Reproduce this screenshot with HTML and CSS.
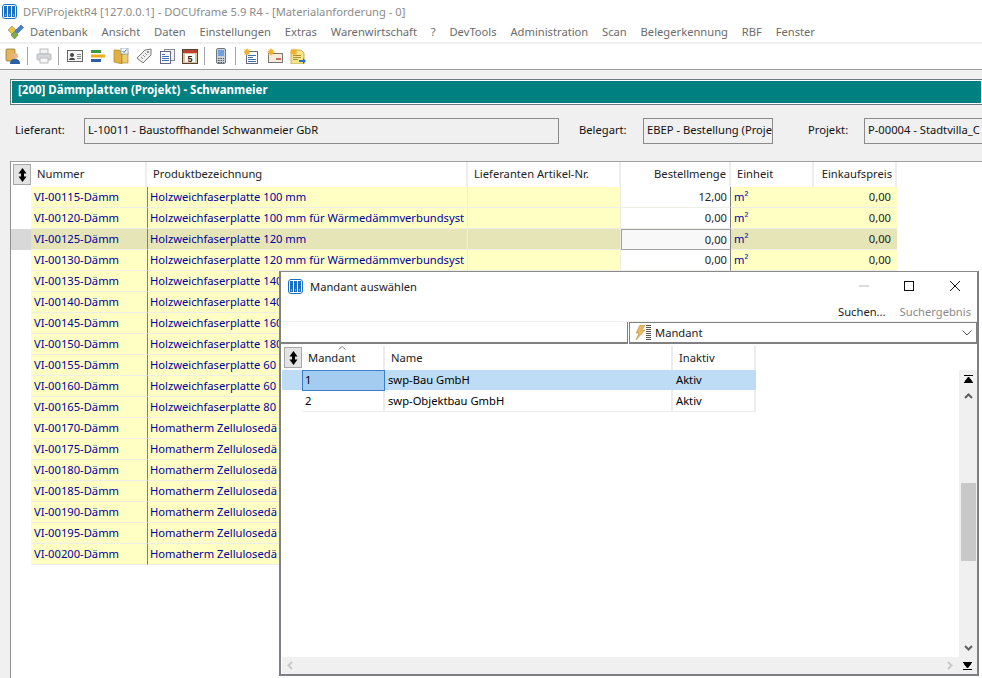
FILE: index.html
```html
<!DOCTYPE html>
<html lang="de">
<head>
<meta charset="utf-8">
<title>DFViProjektR4</title>
<link rel="stylesheet" href="styles.css">
</head>
<body>
<div class="app">
  <header class="titlebar">
    <svg class="appicon" viewBox="0 0 15 15"><rect x="0.5" y="0.5" width="14" height="14" rx="2.5" fill="#fff" stroke="#1a6fc0"/><rect x="2" y="2" width="3" height="11" fill="#1a6fc0"/><rect x="6" y="2" width="3" height="11" fill="#1a6fc0"/><rect x="10" y="2" width="3" height="11" fill="#1a6fc0"/><path d="M3 11h.8M7 11h.8M11 11h.8" stroke="#fff"/></svg>
    <span>DFViProjektR4 [127.0.0.1] - DOCUframe 5.9 R4 - [Materialanforderung - 0]</span>
  </header>
  <nav class="menubar">
    <svg class="menuicon" viewBox="0 0 17 16"><path d="M1 6l4-4 4 4-4 4z" fill="#e8c44a" stroke="#a08a30" stroke-width=".6"/><path d="M8 7l6-6 2.500 2.500-6 6z" fill="#4a7fd0" stroke="#2c5a9c" stroke-width=".6"/><path d="M4 11l3.500-3.500 3.500 3.500-3.500 4z" fill="#7db04a" stroke="#4f7d2c" stroke-width=".6"/></svg>
    <span>Datenbank</span><span>Ansicht</span><span>Daten</span><span>Einstellungen</span><span>Extras</span><span>Warenwirtschaft</span><span>?</span><span>DevTools</span><span>Administration</span><span>Scan</span><span>Belegerkennung</span><span>RBF</span><span>Fenster</span>
  </nav>
  <div class="toolbar">
    <svg class="ti" viewBox="0 0 16 16"><rect x="1" y="1" width="9" height="12" rx="1" fill="#e2b65a" stroke="#8a6a28" stroke-width=".7"/><circle cx="10" cy="8" r="3" fill="#e8b48c"/><path d="M5 16c0-4 2-5 5-5s5 1 5 5z" fill="#2a5fa8"/></svg>
    <i class="sep"></i>
    <svg class="ti" viewBox="0 0 16 16"><rect x="4" y="1" width="8" height="5" fill="#f2f2f2" stroke="#bbb"/><rect x="1" y="6" width="14" height="6" rx="1" fill="#d4d8da" stroke="#b4b8ba"/><rect x="4" y="10" width="8" height="5" fill="#f6f6f6" stroke="#bbb"/></svg>
    <i class="sep"></i>
    <svg class="ti" viewBox="0 0 16 16"><rect x=".5" y="2.500" width="15" height="11" fill="#f4f4f4" stroke="#666"/><circle cx="5" cy="7" r="2" fill="#444"/><path d="M2 12c0-3 6-3 6 0z" fill="#444"/><path d="M10 6.500h4M10 8.500h4M10 10.500h4" stroke="#888"/></svg>
    <svg class="ti" viewBox="0 0 16 16"><rect x="1" y="2" width="10" height="3" fill="#3a9a48"/><rect x="1" y="6.500" width="14" height="3" fill="#e8b020"/><rect x="1" y="11" width="10" height="3" fill="#2a5fa8"/></svg>
    <svg class="ti" viewBox="0 0 16 16"><path d="M1 2h5l3 2v12l-8-2z" fill="#e2b040" stroke="#a07a20" stroke-width=".6"/><path d="M9 4h6v11H9z" fill="#f0cc70" stroke="#a07a20" stroke-width=".6"/><rect x="8" y="0" width="7" height="6" fill="#fff" stroke="#6a8ab0" stroke-width=".7"/><path d="M9.500 3l1.500 1.500 2.500-3" stroke="#2a6fc0" fill="none"/></svg>
    <svg class="ti" viewBox="0 0 16 16"><path d="M1 10L9 2l6-1v6l-8 8z" fill="#f2f2f2" stroke="#777"/><circle cx="12" cy="4" r="1" fill="#777"/><path d="M5 9l2 2M7 7l2 2M9 5l2 2" stroke="#888"/></svg>
    <svg class="ti" viewBox="0 0 16 16"><rect x="5.500" y="1.500" width="10" height="11" fill="#f0f0f0" stroke="#889"/><rect x="1.500" y="3.500" width="10" height="12" fill="#fff" stroke="#668"/><path d="M3 6.500h3M3 8.500h7M3 10.500h7M3 12.500h7" stroke="#3a70b0"/></svg>
    <svg class="ti" viewBox="0 0 16 16"><rect x=".5" y="1.500" width="15" height="14" fill="#d8c4a0" stroke="#5a4030"/><rect x="1" y="2" width="14" height="3" fill="#c04030"/><rect x="3" y="6" width="10" height="8" fill="#fff"/><text x="8" y="13.500" class="caltext">5</text></svg>
    <i class="sep"></i>
    <svg class="ti phone" viewBox="0 0 10 16"><rect x=".5" y=".5" width="9" height="15" rx="1.500" fill="#cdd2d8" stroke="#70767c"/><rect x="2" y="2" width="6" height="6" fill="#6fa0dc"/><path d="M2 10.500h6M2 12.500h6M2 14.500h6" stroke="#555" stroke-dasharray="1.500 1"/></svg>
    <i class="sep"></i>
    <svg class="ti" viewBox="0 0 16 16"><rect x="2.500" y="3.500" width="11" height="12" fill="#fff" stroke="#667"/><path d="M4 7.500h8M4 9.500h5M4 11.500h8M4 13.500h8" stroke="#3a70b0"/><path d="M3 0l1 2 2-1-1 2 2 1-2 1 1 2-2-1-1 2-1-2-2 1 1-2-2-1 2-1-1-2 2 1z" fill="#f0b030"/></svg>
    <svg class="ti" viewBox="0 0 16 16"><rect x="1.500" y="5.500" width="14" height="9" fill="#f4ecd8" stroke="#777"/><path d="M9 11h5" stroke="#c04030" stroke-width="1.500"/><path d="M4 0l1 2 2-1-1 2 2 1-2 1 1 2-2-1-1 2-1-2-2 1 1-2-2-1 2-1-1-2 2 1z" fill="#f0b030"/></svg>
    <svg class="ti" viewBox="0 0 16 16"><path d="M1 2h10l3 3v11H1z" fill="#f8e68c" stroke="#a89030" stroke-width=".7"/><path d="M3 7.500h8M3 9.500h8M3 11.500h5" stroke="#a89030"/><path d="M9 12h4v-2l3 3-3 3v-2H9z" fill="#2a6fc0"/><path d="M4 0l1 2 2-1-1 2 2 1-2 1 1 2-2-1-1 2-1-2-2 1 1-2-2-1 2-1-1-2 2 1z" fill="#f0b030"/></svg>
  </div>

  <main class="workspace">
    <h1 class="banner">[200] Dämmplatten (Projekt) - Schwanmeier</h1>
    <div class="fields">
      <label class="lbl-l">Lieferant:</label><div class="field f-l">L-10011 - Baustoffhandel Schwanmeier GbR</div>
      <label class="lbl-b">Belegart:</label><div class="field f-b">EBEP - Bestellung (Proje</div>
      <label class="lbl-p">Projekt:</label><div class="field f-p">P-00004 - Stadtvilla_C</div>
    </div>
    <section class="grid">
      <div class="row head">
        <div class="sorter"><svg viewBox="0 0 9 14"><path d="M4.500 0L8.500 5.500H.5zM4.500 14L.5 8.500h8z M3 5h3v4H3z" fill="#000"/></svg></div>
        <div class="c n">Nummer</div><div class="c p">Produktbezeichnung</div><div class="c a">Lieferanten Artikel-Nr.</div><div class="c m r">Bestellmenge</div><div class="c e">Einheit</div><div class="c k r">Einkaufspreis</div>
      </div>
      <div class="row"><div class="ind"></div><div class="c n">VI-00115-Dämm</div><div class="c p">Holzweichfaserplatte 100 mm</div><div class="c a"></div><div class="c m r">12,00</div><div class="c e">m²</div><div class="c k r">0,00</div></div>
      <div class="row"><div class="ind"></div><div class="c n">VI-00120-Dämm</div><div class="c p">Holzweichfaserplatte 100 mm für Wärmedämmverbundsyst</div><div class="c a"></div><div class="c m r">0,00</div><div class="c e">m²</div><div class="c k r">0,00</div></div>
      <div class="row sel"><div class="ind"></div><div class="c n">VI-00125-Dämm</div><div class="c p">Holzweichfaserplatte 120 mm</div><div class="c a"></div><div class="c m r">0,00</div><div class="c e">m²</div><div class="c k r">0,00</div></div>
      <div class="row"><div class="ind"></div><div class="c n">VI-00130-Dämm</div><div class="c p">Holzweichfaserplatte 120 mm für Wärmedämmverbundsyst</div><div class="c a"></div><div class="c m r">0,00</div><div class="c e">m²</div><div class="c k r">0,00</div></div>
      <div class="row"><div class="ind"></div><div class="c n">VI-00135-Dämm</div><div class="c p">Holzweichfaserplatte 140</div></div>
      <div class="row"><div class="ind"></div><div class="c n">VI-00140-Dämm</div><div class="c p">Holzweichfaserplatte 140</div></div>
      <div class="row"><div class="ind"></div><div class="c n">VI-00145-Dämm</div><div class="c p">Holzweichfaserplatte 160</div></div>
      <div class="row"><div class="ind"></div><div class="c n">VI-00150-Dämm</div><div class="c p">Holzweichfaserplatte 180</div></div>
      <div class="row"><div class="ind"></div><div class="c n">VI-00155-Dämm</div><div class="c p">Holzweichfaserplatte 60</div></div>
      <div class="row"><div class="ind"></div><div class="c n">VI-00160-Dämm</div><div class="c p">Holzweichfaserplatte 60</div></div>
      <div class="row"><div class="ind"></div><div class="c n">VI-00165-Dämm</div><div class="c p">Holzweichfaserplatte 80</div></div>
      <div class="row"><div class="ind"></div><div class="c n">VI-00170-Dämm</div><div class="c p">Homatherm Zellulosedä</div></div>
      <div class="row"><div class="ind"></div><div class="c n">VI-00175-Dämm</div><div class="c p">Homatherm Zellulosedä</div></div>
      <div class="row"><div class="ind"></div><div class="c n">VI-00180-Dämm</div><div class="c p">Homatherm Zellulosedä</div></div>
      <div class="row"><div class="ind"></div><div class="c n">VI-00185-Dämm</div><div class="c p">Homatherm Zellulosedä</div></div>
      <div class="row"><div class="ind"></div><div class="c n">VI-00190-Dämm</div><div class="c p">Homatherm Zellulosedä</div></div>
      <div class="row"><div class="ind"></div><div class="c n">VI-00195-Dämm</div><div class="c p">Homatherm Zellulosedä</div></div>
      <div class="row"><div class="ind"></div><div class="c n">VI-00200-Dämm</div><div class="c p">Homatherm Zellulosedä</div></div>
    </section>
  </main>

  <div class="dialog">
    <div class="dlg-title">
      <svg class="dlg-icon" viewBox="0 0 15 15"><rect x="0.5" y="0.5" width="14" height="14" rx="2.5" fill="#fff" stroke="#1a6fc0"/><rect x="2" y="2" width="3" height="11" fill="#1a6fc0"/><rect x="6" y="2" width="3" height="11" fill="#1a6fc0"/><rect x="10" y="2" width="3" height="11" fill="#1a6fc0"/><path d="M3 11h.8M7 11h.8M11 11h.8" stroke="#fff"/></svg>
      <span class="dlg-name">Mandant auswählen</span>
      <svg class="wc w-min" viewBox="0 0 10 10"><path d="M0 5h10" stroke="#b8b8b8"/></svg>
      <svg class="wc w-max" viewBox="0 0 10 10"><rect x=".5" y=".5" width="9" height="9" fill="none" stroke="#111"/></svg>
      <svg class="wc w-close" viewBox="0 0 10 10"><path d="M0 0l10 10M10 0L0 10" stroke="#111"/></svg>
    </div>
    <div class="dlg-tools"><span>Suchen...</span><span class="s2t">Suchergebnis</span></div>
    <div class="search">
      <div class="search-in"></div>
      <div class="search-field">
        <svg class="bolt" viewBox="0 0 18 16"><path d="M6 0h5L8 5h3L2 15l3-7H2z" fill="#e8b860" stroke="#b08030" stroke-width=".5"/><path d="M12 .5h5M12 2.500h5M12 4.500h5M12 6.500h5M12 8.500h5M12 10.500h5M12 12.500h5M12 14.500h5" stroke="#555"/></svg>
        <span>Mandant</span>
        <svg class="chev" viewBox="0 0 10 6"><path d="M.5.5L5 5 9.500.5" fill="none" stroke="#555"/></svg>
      </div>
    </div>
    <div class="dlg-body">
      <div class="dlg-grid">
        <div class="drow dhead">
          <div class="sorter dsort"><svg viewBox="0 0 9 14"><path d="M4.500 0L8.500 5.500H.5zM4.500 14L.5 8.500h8z M3 5h3v4H3z" fill="#000"/></svg></div>
          <div class="d1 dh"><svg class="caret" viewBox="0 0 8 4"><path d="M.5 3.500L4 .5l3.500 3" fill="none" stroke="#888"/></svg>Mandant</div><div class="d2 dh">Name</div><div class="d3 dh">Inaktiv</div>
        </div>
        <div class="drow active"><div class="dind"></div><div class="d1 cur">1</div><div class="d2">swp-Bau GmbH</div><div class="d3">Aktiv</div></div>
        <div class="drow"><div class="dind"></div><div class="d1">2</div><div class="d2">swp-Objektbau GmbH</div><div class="d3">Aktiv</div></div>
      </div>
      <div class="vbar">
        <svg class="vtop" viewBox="0 0 9 8"><path d="M0 .5h9M0 7.500h9M4.500 2L8 6.500H1z" stroke="#000" fill="#000" stroke-width="1"/></svg>
        <svg class="varrow" viewBox="0 0 9 6"><path d="M1 5l3.500-3.500L8 5" fill="none" stroke="#606060" stroke-width="2"/></svg>
        <div class="vspace1"></div>
        <div class="vthumb"></div>
        <div class="vspace2"></div>
        <svg class="varrow" viewBox="0 0 9 6"><path d="M1 1l3.500 3.500L8 1" fill="none" stroke="#606060" stroke-width="2"/></svg>
      </div>
      <div class="hbar">
        <svg class="harrow" viewBox="0 0 6 9"><path d="M5 1L1.500 4.500 5 8" fill="none" stroke="#c8c8c8" stroke-width="2"/></svg>
        <svg class="harrow hr" viewBox="0 0 6 9"><path d="M1 1l3.500 3.500L1 8" fill="none" stroke="#c8c8c8" stroke-width="2"/></svg>
        <svg class="vbot" viewBox="0 0 9 8"><path d="M0 .5h9M0 7.500h9M4.500 6L1 1.500h7z" stroke="#000" fill="#000" stroke-width="1"/></svg>
      </div>
    </div>
  </div>
</div>
</body>
</html>
```
FILE: styles.css
```css
* { box-sizing: border-box; }
html, body { margin: 0; height: 100%; }
body { font-family: "Noto Sans", "Open Sans", sans-serif; font-size: 11.2px; background: #fff; color: #000; overflow: hidden; }
.app { position: relative; width: 982px; height: 678px; overflow: hidden; display: flex; flex-direction: column; }

.titlebar { height: 22px; display: flex; align-items: center; padding: 1px 0 0 2px; color: #8c8c8c; gap: 6px; white-space: nowrap; }
.appicon { width: 15px; height: 15px; }

.menubar { height: 19px; display: flex; align-items: center; color: #6b6b6b; white-space: nowrap; padding-left: 7px; }
.menuicon { width: 17px; height: 16px; margin-right: 6px; }
.menubar span { margin-right: 13.800px; }

.toolbar { height: 28px; margin-top: 1px; border-top: 2px solid #f0f0f0; border-bottom: 1px solid #a0a0a0; display: flex; align-items: center; padding: 0 0 2px 5px; gap: 7px; background: #fff; }
.ti { width: 16px; height: 16px; flex: none; }
.ti.phone { width: 10px; margin-left: 3px; margin-right: 3px; }
.sep { width: 1px; height: 18px; background: #a8a8a8; flex: none; margin: 0 1px 0 -1px; }
.caltext { font: bold 9px "Liberation Sans", sans-serif; text-anchor: middle; fill: #222; }

.workspace { flex: 1; background: #f0f0f0; padding: 9px 0 0 10px; display: flex; flex-direction: column; }
.banner { margin: 0; height: 26px; background: #008080; color: #fff; font-size: 11.5px; font-weight: 700; line-height: 20px; padding-left: 7px; border: 1px solid #6a7a7a; border-right: 0; box-shadow: inset 0 0 0 1px #fff; }

.fields { height: 56px; display: flex; align-items: flex-start; padding-top: 13px; white-space: nowrap; margin-left: -10px; }
.fields label { line-height: 23px; color: #111; }
.lbl-l { margin-left: 15px; width: 69px; }
.lbl-b { margin-left: 20px; width: 64px; }
.lbl-p { margin-left: 35px; width: 56px; }
.field { height: 26px; border: 1px solid #8a8a8a; line-height: 21px; padding-left: 3px; overflow: hidden; background: #f0f0f0; color: #111; }
.f-l { width: 475px; }
.f-b { width: 130px; }
.f-p { width: 118px; border-right: 0; }

.grid { flex: 1; background: #fff; border-top: 1px solid #a0a0a0; border-left: 1px solid #909090; }
.row { display: grid; grid-template-columns: 20px 116px 321px 153px 110px 83px 83px; width: 886px; height: 21px; line-height: 20px; }
.c { white-space: nowrap; overflow: hidden; padding-left: 3px; height: 21px; border-bottom: 1px solid #eeeee8; color: #0000a0; background: #ffffc4; }
.c.p { border-left: 1px solid #808080; border-right: 1px solid #eeeee8; padding-left: 2px; }
.c.a { border-right: 1px solid #eeeee8; }
.c.m { background: #fff; color: #222; border-right: 1px solid #808080; }
.c.k { color: #222; }
.c.r { text-align: right; padding-right: 3px; }
.c.k.r { padding-right: 6px; }
.ind { background: #fff; height: 21px; }

.row.head { height: 25px; line-height: 24px; }
.head .c { background: #fff; color: #222; height: 25px; padding-left: 6px; border-bottom: 0; border-left: 0; border-right: 2px solid #eeeeee; }
.head .c.m.r { padding: 0 3px 0 0; }
.head .c.k.r { padding: 0 3px 0 0; }
.sorter { width: 18px; height: 21px; margin: 2px 0 0 2px; border: 1px solid #a8a8a8; background: #e4e4e4; display: flex; align-items: center; justify-content: center; }
.sorter svg { width: 9px; height: 14px; }

.sel .c { background: #e5e5b8; color: #0000a0; }
.sel .ind { background: #d8d8d8; }
.sel .c.m { background: #f8f8f8; color: #222; border: 1px solid #a0a0a0; border-right: 1px solid #808080; }
.sel .c.k { color: #222; }

.dialog { position: absolute; left: 279px; top: 271px; width: 700px; height: 405px; background: #fff; border: 2px solid #7e7e84; border-top: 1px solid #8a8a8a; display: flex; flex-direction: column; }
.dlg-title { height: 28px; display: flex; align-items: center; padding-left: 7px; color: #222; }
.dlg-icon { width: 15px; height: 15px; margin-right: 7px; }
.dlg-name { flex: 1; }
.wc { width: 10px; height: 10px; flex: none; }
.w-min { margin-right: 35px; }
.w-max { margin-right: 36px; }
.w-close { margin-right: 17px; }
.dlg-tools { height: 21px; display: flex; justify-content: flex-end; align-items: center; gap: 14px; padding: 1px 6px 0 0; color: #222; }
.s2t { color: #8a8a8a; }
.search { height: 24px; display: flex; border-top: 1px solid #f0f0f0; }
.search-in { width: 347px; height: 22px; border-bottom: 2px solid #808080; border-right: 1px solid #808080; }
.search-field { flex: 1; height: 22px; margin-left: 1px; border: 1px solid #808080; border-bottom: 2px solid #808080; display: flex; align-items: center; padding-left: 4px; gap: 3px; color: #222; }
.bolt { width: 18px; height: 16px; }
.search-field span { flex: 1; line-height: 18px; }
.chev { width: 10px; height: 6px; margin-right: 4px; }

.dlg-body { flex: 1; display: grid; grid-template-columns: 678px 18px; grid-template-rows: 1fr 17px; min-height: 0; }
.dlg-grid { padding-left: 1px; padding-top: 1px; }
.drow { display: grid; grid-template-columns: 20px 83px 288px 83px; width: 474px; height: 21px; line-height: 20px; }
.drow > div:not(.dsort) { white-space: nowrap; padding-left: 3px; border-bottom: 1px solid #ececec; border-right: 2px solid #ececec; }
.drow > div.dind { border: 0; }
.dhead { height: 24px; line-height: 24px; }
.drow > div.dh { padding-left: 6px; border-bottom: 0; color: #222; position: relative; }
.caret { position: absolute; left: 36px; top: 0; width: 8px; height: 4px; }
.dsort { margin: 1px 0 0 2px; }
.active { background: #bedcf5; }
.drow.active > div { border-bottom: 1px solid #fff; border-right-color: transparent; }
.active .dind { background: #bedcf5; }
.drow.active > div.cur { background: #a4ccf0; border: 1px solid #3a80c8; padding-left: 2px; line-height: 18px; }

.vbar { background: #f0f0f0; display: flex; flex-direction: column; align-items: center; margin-top: 25px; padding-top: 5px; }
.vtop { width: 9px; height: 8px; flex: none; }
.vbot { width: 9px; height: 8px; flex: none; margin-right: 5px; }
.varrow { width: 9px; height: 6px; flex: none; margin-top: 10px; }
.vspace1 { height: 84px; flex: none; }
.vthumb { width: 15px; height: 78px; background: #c8c8c8; flex: none; }
.vspace2 { flex: 1; }
.vbar .varrow:last-child { margin: 0 0 6px; }
.hbar { grid-column: 1 / 3; background: #f0f0f0; margin-left: 1px; display: flex; align-items: center; padding-left: 5px; }
.harrow { width: 6px; height: 9px; }
.harrow.hr { margin-left: auto; margin-right: 10px; }
```
